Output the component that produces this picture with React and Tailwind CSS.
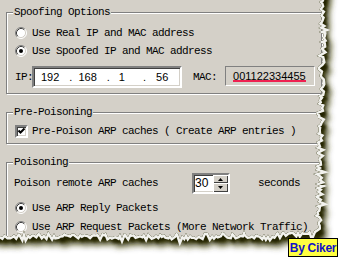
import React from 'react';

// torn paper edge (right + bottom), generated once
const rng = (seed) => {
    let s = seed;
    return () => {
        s = (s * 16807) % 2147483647;
        return s / 2147483647;
    };
};
const rand = rng(11);
const pts = ['M-20 -20', 'L324 -20'];
for (let y = 0; y <= 228; y += 2) {
    const spike = rand() > 0.85 ? (rand() - 0.5) * 10 : 0;
    const x = 322 - y * 0.025 + (rand() - 0.5) * 6 + spike;
    pts.push(`L${x.toFixed(1)} ${y}`);
}
for (let x = 314; x >= -20; x -= 2) {
    const base = x > 270 ? 232 + (314 - x) * 0.05 : 235;
    const spike = rand() > 0.85 ? (rand() - 0.5) * 8 : 0;
    const y = base + (rand() - 0.5) * 5 + spike;
    pts.push(`L${x} ${y.toFixed(1)}`);
}
pts.push('Z');
const paper = pts.join(' ');

const sunken =
    'border-2 border-t-[#808080] border-l-[#808080] border-b-white border-r-white shadow-[inset_1px_1px_0_#404040,inset_-1px_-1px_0_#d4d0c8]';

const Radio = ({ checked }) => (
    <svg width="12" height="12" viewBox="0 0 12 12" className="shrink-0">
        <circle cx="6" cy="6" r="5" fill="#fff" />
        <path d="M2.11 9.89A5.5 5.5 0 0 1 9.89 2.11" fill="none" stroke="#808080" />
        <path d="M9.89 2.11A5.5 5.5 0 0 1 2.11 9.89" fill="none" stroke="#fff" />
        <path d="M2.82 9.18A4.5 4.5 0 0 1 9.18 2.82" fill="none" stroke="#404040" />
        <path d="M9.18 2.82A4.5 4.5 0 0 1 2.82 9.18" fill="none" stroke="#d4d0c8" />
        {checked && <circle cx="6" cy="6" r="2" fill="#000" />}
    </svg>
);

const Check = () => (
    <div className={`h-[13px] w-[13px] shrink-0 bg-white ${sunken}`}>
        <svg width="9" height="9" viewBox="0 0 9 9">
            <polyline points="1.5,3.5 3.5,5.5 7.5,1.5" fill="none" stroke="#000" strokeWidth="2" />
        </svg>
    </div>
);

const Group = ({ title, className, children }) => (
    <div className={`border border-[#808080] shadow-[inset_1px_1px_0_#fff,1px_1px_0_#fff] ${className}`}>
        <div className="-mt-[8px] ml-[6px] w-fit bg-[#d4d0c8] px-[1px] leading-[14px]">{title}</div>
        {children}
    </div>
);

const Arrow = ({ up }) => (
    <svg width="5" height="3" viewBox="0 0 5 3">
        <polygon points={up ? '2.5,0 5,3 0,3' : '0,0 5,0 2.5,3'} fill="#000" />
    </svg>
);

const App = () => {
    return (
        <div className="relative h-[258px] w-[342px] overflow-hidden bg-[#d4d0c8] pl-[6px] pt-[12px] font-['Liberation_Mono',monospace] text-[11px] tracking-[-0.6px] text-black">
            <Group title="Spoofing Options" className="h-[82px] w-[316px]">
                <div className="ml-[8px] mt-[7px] flex h-[14px] items-center gap-[5px]">
                    <Radio />
                    <span>Use Real IP and MAC address</span>
                </div>
                <div className="ml-[8px] mt-[4px] flex h-[14px] items-center gap-[5px]">
                    <Radio checked />
                    <span>Use Spoofed IP and MAC address</span>
                </div>
                <div className="ml-[8px] mt-[8px] flex h-[22px] items-center">
                    <span className="w-[17px]">IP:</span>
                    <div className={`flex h-[22px] w-[150px] items-center bg-white font-['Liberation_Sans',sans-serif] tracking-normal ${sunken}`}>
                        <span className="ml-[7px]">192</span>
                        <span className="ml-[10px]">.</span>
                        <span className="ml-[6px]">168</span>
                        <span className="ml-[10px]">.</span>
                        <span className="ml-[9px]">1</span>
                        <span className="ml-[18px]">.</span>
                        <span className="ml-[10px]">56</span>
                    </div>
                    <span className="ml-[11px]">MAC:</span>
                    <div className="relative ml-[8px] -mt-[2px] flex h-[20px] w-[90px] items-center border border-t-[#808080] border-l-[#808080] border-b-white border-r-white pl-[7px] font-['Liberation_Sans',sans-serif] tracking-normal">
                        <span>001122334455</span>
                        <div className="absolute left-[7px] top-[13px] h-[2px] w-[73px] bg-[#ee2050]" />
                    </div>
                </div>
            </Group>

            <Group title="Pre-Poisoning" className="mt-[18px] h-[32px] w-[316px]">
                <div className="ml-[8px] mt-[5px] flex h-[14px] items-center gap-[4px]">
                    <Check />
                    <span>Pre-Poison ARP caches ( Create ARP entries )</span>
                </div>
            </Group>

            <Group title="Poisoning" className="mt-[18px] h-[90px] w-[316px]">
                <div className="mt-[4px] flex h-[21px] items-center">
                    <span className="ml-[7px] w-[178px]">Poison remote ARP caches</span>
                    <div className={`flex h-[21px] w-[38px] bg-white ${sunken}`}>
                        <span className="flex-1 pl-[1px] font-['Liberation_Sans',sans-serif] text-[12px] leading-[17px] tracking-normal">30</span>
                        <div className="flex w-[15px] flex-col">
                            <div className="flex h-[8px] items-center justify-center bg-[#d4d0c8] shadow-[inset_1px_1px_0_#fff,inset_-1px_-1px_0_#404040]">
                                <Arrow up />
                            </div>
                            <div className="flex h-[9px] items-center justify-center bg-[#d4d0c8] shadow-[inset_1px_1px_0_#fff,inset_-1px_-1px_0_#404040]">
                                <Arrow />
                            </div>
                        </div>
                    </div>
                    <span className="ml-[28px]">seconds</span>
                </div>
                <div className="ml-[8px] mt-[7px] flex h-[14px] items-center gap-[5px]">
                    <Radio checked />
                    <span>Use ARP Reply Packets</span>
                </div>
                <div className="ml-[8px] mt-[5px] flex h-[14px] items-center gap-[5px]">
                    <Radio />
                    <span>Use ARP Request Packets (More Network Traffic)</span>
                </div>
            </Group>

            <svg className="pointer-events-none absolute inset-0" width="342" height="258">
                <defs>
                    <clipPath id="outside">
                        <path clipRule="evenodd" d={`M-30 -30H372V288H-30Z ${paper}`} />
                    </clipPath>
                    <filter id="soft" x="-10%" y="-10%" width="130%" height="130%">
                        <feGaussianBlur stdDeviation="1.8" />
                    </filter>
                    <filter id="wide" x="-10%" y="-10%" width="130%" height="130%">
                        <feGaussianBlur stdDeviation="3" />
                    </filter>
                </defs>
                <g clipPath="url(#outside)">
                    <rect x="-30" y="-30" width="400" height="320" fill="#fff" />
                    <path d={paper} transform="translate(8,10)" fill="#3a3a10" filter="url(#wide)" />
                    <path d={paper} transform="translate(5,6)" fill="#242404" filter="url(#soft)" />
                    <path d={paper} fill="none" stroke="#f2f2ee" strokeWidth="5" />
                </g>
            </svg>

            <div className="absolute left-[288px] top-[238px] flex h-[19px] w-[50px] items-center justify-center border border-black bg-[#ffff40] font-['Liberation_Sans',sans-serif] text-[12px] font-bold tracking-[-0.3px] text-[#1010c8]">
                By Ciker
            </div>
        </div>
    );
};

export default App;
